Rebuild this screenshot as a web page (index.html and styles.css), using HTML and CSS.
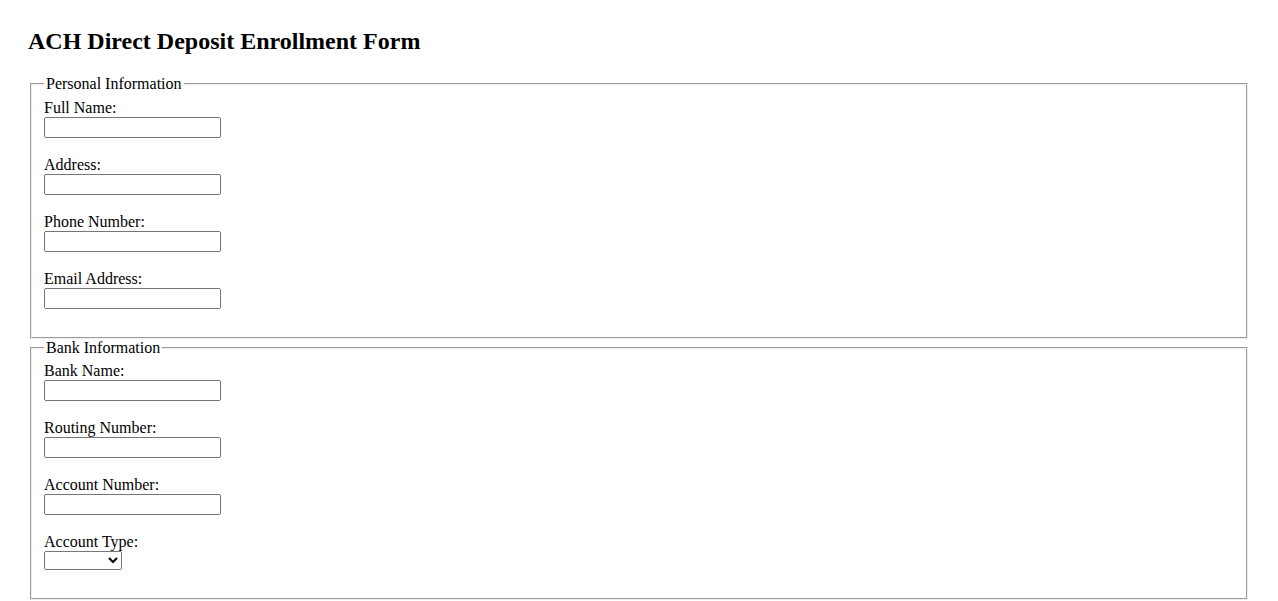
FILE: index.html
```html
<!DOCTYPE html>
<html>
<head>
<meta charset="utf-8">
<title>ACH Direct Deposit Enrollment Form</title>
<link rel="stylesheet" href="styles.css">
</head>
<body>
<div class="container">
<h2 class="title">ACH Direct Deposit Enrollment Form</h2>
<form>
<fieldset class="section">
<legend>Personal Information</legend>
<label for="fullName">Full Name:</label><br>
<input class="field" type="text" id="fullName"><br><br>
<label for="address">Address:</label><br>
<input class="field" type="text" id="address"><br><br>
<label for="phone">Phone Number:</label><br>
<input class="field" type="text" id="phone"><br><br>
<label for="email">Email Address:</label><br>
<input class="field" type="text" id="email"><br><br>
</fieldset>
<fieldset class="section">
<legend>Bank Information</legend>
<label for="bankName">Bank Name:</label><br>
<input class="field" type="text" id="bankName"><br><br>
<label for="routing">Routing Number:</label><br>
<input class="field" type="text" id="routing"><br><br>
<label for="account">Account Number:</label><br>
<input class="field" type="text" id="account"><br><br>
<label for="type">Account Type:</label><br>
<select class="choice" id="type">
<option value=""></option>
<option value="checking">Checking</option>
<option value="savings">Savings</option>
</select><br><br>
</fieldset>
</form>
</div>
</body>
</html>
```
FILE: styles.css
```css
body {
  margin: 8px;
  font-family: "Liberation Serif", "Times New Roman", serif;
  font-size: 16px;
  color: #000;
  background: #fff;
}
.container {
  padding: 20px;
}
.title {
  font-size: 24px;
  font-weight: bold;
  margin: 0 0 20px 0;
}
.section {
  margin: 0 2px;
}
.field {
  box-sizing: border-box;
  width: 177px;
  height: 21px;
}
.choice {
  box-sizing: border-box;
  width: 78px;
}
```
